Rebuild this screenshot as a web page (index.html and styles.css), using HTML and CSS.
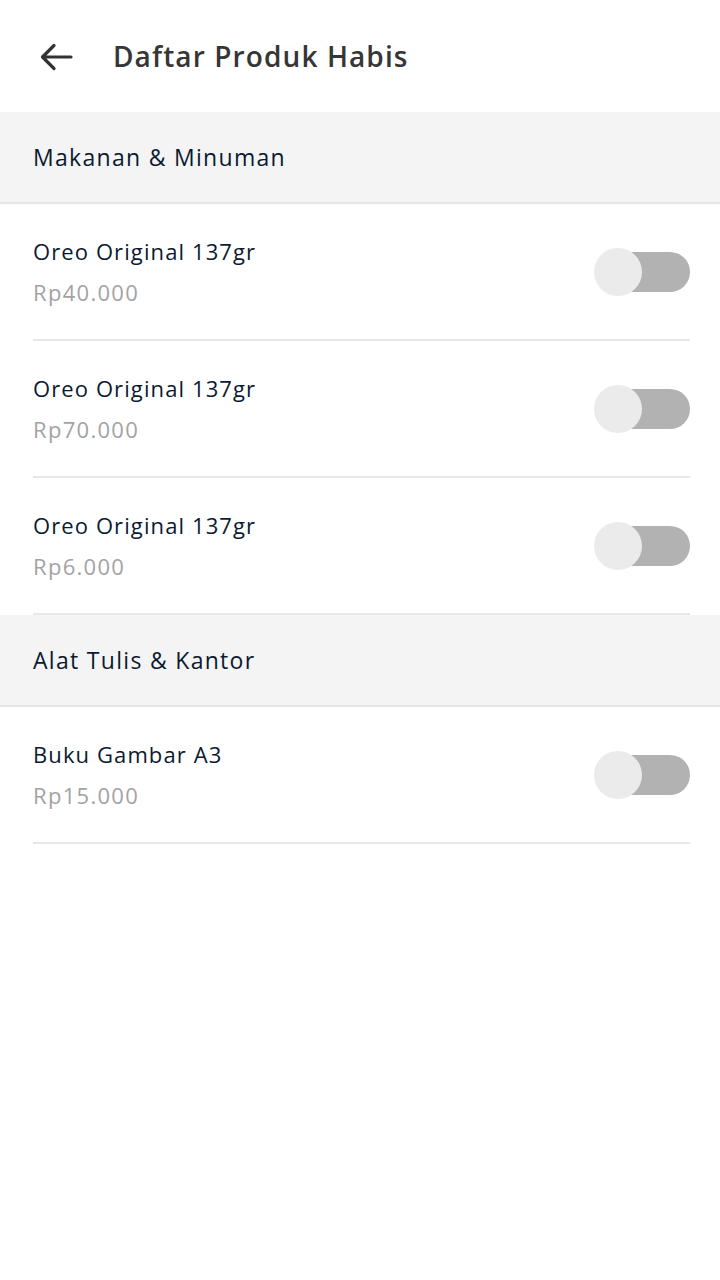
FILE: index.html
```html
<!DOCTYPE html>
<html lang="id">
<head>
<meta charset="utf-8">
<title>Daftar Produk Habis</title>
<link rel="stylesheet" href="styles.css">
</head>
<body>
<header class="topbar">
  <svg class="back" width="34" height="30" viewBox="0 0 34 30" aria-hidden="true">
    <path d="M32 15H4M15 3.5L3.5 15L15 26.5" fill="none" stroke="#333" stroke-width="3.2" stroke-linecap="round" stroke-linejoin="round"/>
  </svg>
  <h1 class="title">Daftar Produk Habis</h1>
</header>

<section class="category">Makanan &amp; Minuman</section>
<div class="item">
  <div class="info"><div class="name">Oreo Original 137gr</div><div class="price">Rp40.000</div></div>
  <div class="toggle"><span class="track"></span><span class="thumb"></span></div>
</div>
<div class="item">
  <div class="info"><div class="name">Oreo Original 137gr</div><div class="price">Rp70.000</div></div>
  <div class="toggle"><span class="track"></span><span class="thumb"></span></div>
</div>
<div class="item">
  <div class="info"><div class="name">Oreo Original 137gr</div><div class="price">Rp6.000</div></div>
  <div class="toggle"><span class="track"></span><span class="thumb"></span></div>
</div>

<section class="category">Alat Tulis &amp; Kantor</section>
<div class="item">
  <div class="info"><div class="name">Buku Gambar A3</div><div class="price">Rp15.000</div></div>
  <div class="toggle"><span class="track"></span><span class="thumb"></span></div>
</div>
</body>
</html>
```
FILE: styles.css
```css
* { box-sizing: border-box; }
body {
  margin: 0;
  background: #fff;
  font-family: "Open Sans", "Noto Sans", sans-serif;
  width: 720px;
}
.topbar {
  height: 112px;
  display: flex;
  align-items: center;
  padding-left: 39px;
}
.back { display: block; margin-top: 2px; }
.title {
  margin: 0 0 0 40px;
  font-size: 28px;
  font-weight: 600;
  color: #363636;
  letter-spacing: 1.1px;
}
.category {
  height: 92px;
  background: #f4f4f4;
  border-bottom: 2px solid #e6e6e6;
  display: flex;
  align-items: center;
  padding-left: 33px;
  font-size: 23px;
  letter-spacing: 1.3px;
  color: #0b1a30;
}
.item {
  height: 137px;
  margin: 0 30px 0 33px;
  border-bottom: 2px solid #e7e7e7;
  display: flex;
  align-items: center;
  justify-content: space-between;
}
.name {
  font-size: 22px;
  line-height: 41px;
  letter-spacing: 1.1px;
  color: #0b1a30;
}
.price {
  font-size: 22px;
  line-height: 41px;
  letter-spacing: 1.3px;
  color: #a3a3a3;
}
.toggle {
  position: relative;
  width: 96px;
  height: 48px;
}
.track {
  position: absolute;
  left: 6px;
  right: 0;
  top: 4px;
  height: 40px;
  border-radius: 20px;
  background: #b2b2b2;
}
.thumb {
  position: absolute;
  left: 0;
  top: 0;
  width: 48px;
  height: 48px;
  border-radius: 50%;
  background: #ebebeb;
}
```
